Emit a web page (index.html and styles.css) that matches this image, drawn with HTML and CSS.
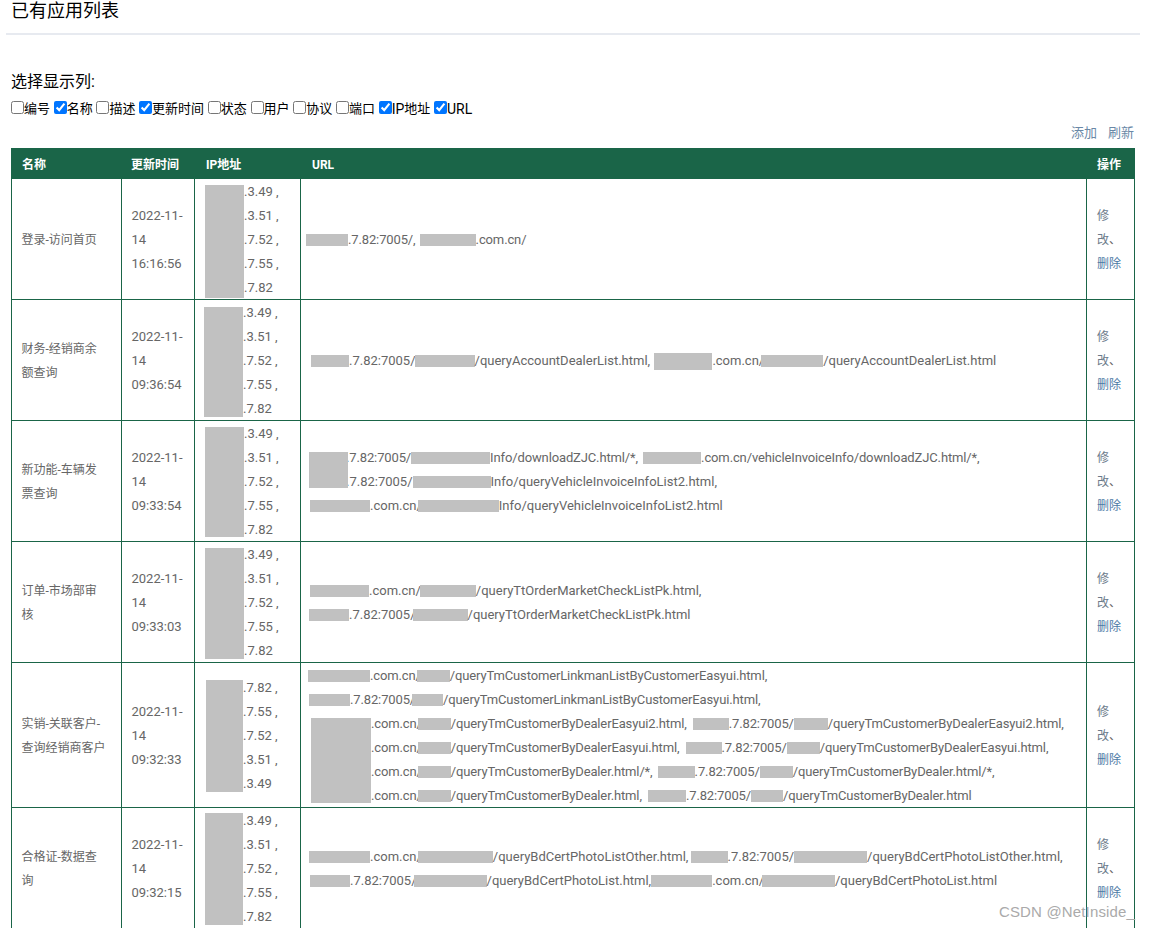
FILE: index.html
```html
<!DOCTYPE html>
<html lang="zh-CN">
<head>
<meta charset="utf-8">
<title>已有应用列表</title>
<link rel="stylesheet" href="styles.css">
</head>
<body>
<div class="page">
  <header class="head"><h1 class="title">已有应用列表</h1></header>
  <p class="cols-label">选择显示列:</p>
  <div class="cols">
    <label><input type="checkbox">编号</label>
    <label><input type="checkbox" checked>名称</label>
    <label><input type="checkbox">描述</label>
    <label><input type="checkbox" checked>更新时间</label>
    <label><input type="checkbox">状态</label>
    <label><input type="checkbox">用户</label>
    <label><input type="checkbox">协议</label>
    <label><input type="checkbox">端口</label>
    <label><input type="checkbox" checked><span class="lat">IP</span>地址</label>
    <label><input type="checkbox" checked><span class="lat">URL</span></label>
  </div>
  <div class="actions"><a href="#">添加</a><a href="#">刷新</a></div>
  <table class="grid">
    <colgroup><col class="c1"><col class="c2"><col class="c3"><col><col class="c5"></colgroup>
    <thead><tr><th>名称</th><th class="th-date">更新时间</th><th class="th-ip">IP地址</th><th class="th-url">URL</th><th>操作</th></tr></thead>
    <tbody>
      <tr>
        <td class="name">登录-访问首页</td>
        <td class="date">2022-11-14<br>16:16:56</td>
        <td class="ipc"><div class="ip"><i class="m ip-a"></i><div>.3.49 ,<br>.3.51 ,<br>.7.52 ,<br>.7.55 ,<br>.7.82</div></div></td>
        <td class="url"><div class="l"><i class="m p1 w42"></i>.7.82:7005/, <i class="m p1 w56"></i>.com.cn/</div></td>
        <td class="op"><a href="#" class="edit">修改</a>、<a href="#">删除</a></td>
      </tr>
      <tr>
        <td class="name">财务-经销商余额查询</td>
        <td class="date">2022-11-14<br>09:36:54</td>
        <td class="ipc"><div class="ip"><i class="m ip-b"></i><div>.3.49 ,<br>.3.51 ,<br>.7.52 ,<br>.7.55 ,<br>.7.82</div></div></td>
        <td class="url"><div class="l w"><i class="m p6 w38"></i>.7.82:7005/<i class="m n1 w60"></i>/queryAccountDealerList.html, <i class="m tall p1 w58"></i>.com.cn/<i class="m n3 w62"></i>/queryAccountDealerList.html</div></td>
        <td class="op"><a href="#" class="edit">修改</a>、<a href="#">删除</a></td>
      </tr>
      <tr>
        <td class="name">新功能-车辆发票查询</td>
        <td class="date">2022-11-14<br>09:33:54</td>
        <td class="ipc"><div class="ip"><i class="m ip-c"></i><div>.3.49 ,<br>.3.51 ,<br>.7.52 ,<br>.7.55 ,<br>.7.82</div></div></td>
        <td class="url">
          <i class="m over o-c"></i>
          <div class="l"><i class="m sp p4 w37"></i>.7.82:7005/<i class="m w79"></i>Info/downloadZJC.html/*, <i class="m p2 w58"></i>.com.cn/vehicleInvoiceInfo/downloadZJC.html/*,</div>
          <div class="l w"><i class="m sp p4 w37"></i>.7.82:7005/<i class="m w78"></i>Info/queryVehicleInvoiceInfoList2.html,</div>
          <div class="l w"><i class="m p5 w60"></i>.com.cn/<i class="m n4 w81"></i>Info/queryVehicleInvoiceInfoList2.html</div>
        </td>
        <td class="op"><a href="#" class="edit">修改</a>、<a href="#">删除</a></td>
      </tr>
      <tr>
        <td class="name">订单-市场部审核</td>
        <td class="date">2022-11-14<br>09:33:03</td>
        <td class="ipc"><div class="ip"><i class="m ip-d"></i><div>.3.49 ,<br>.3.51 ,<br>.7.52 ,<br>.7.55 ,<br>.7.82</div></div></td>
        <td class="url">
          <div class="l w"><i class="m p5 w59"></i>.com.cn/<i class="m n1 w56"></i>/queryTtOrderMarketCheckListPk.html,</div>
          <div class="l w"><i class="m p4 w40"></i>.7.82:7005/<i class="m n3 w55"></i>/queryTtOrderMarketCheckListPk.html</div>
        </td>
        <td class="op"><a href="#" class="edit">修改</a>、<a href="#">删除</a></td>
      </tr>
      <tr>
        <td class="name">实销-关联客户-查询经销商客户</td>
        <td class="date">2022-11-14<br>09:32:33</td>
        <td class="ipc"><div class="ip"><i class="m ip-e"></i><div>.7.82 ,<br>.7.55 ,<br>.7.52 ,<br>.3.51 ,<br>.3.49</div></div></td>
        <td class="url">
          <i class="m over o-e"></i>
          <div class="l"><i class="m p3 w62"></i>.com.cn/<i class="m n4 w33"></i>/queryTmCustomerLinkmanListByCustomerEasyui.html,</div>
          <div class="l"><i class="m p4 w41"></i>.7.82:7005/<i class="m n3 w31"></i>/queryTmCustomerLinkmanListByCustomerEasyui.html,</div>
          <div class="l"><i class="m sp p3 w63"></i>.com.cn/<i class="m n4 w33"></i>/queryTmCustomerByDealerEasyui2.html, <i class="m p3 w36"></i>.7.82:7005/<i class="m w34"></i>/queryTmCustomerByDealerEasyui2.html,</div>
          <div class="l"><i class="m sp p3 w63"></i>.com.cn/<i class="m n4 w33"></i>/queryTmCustomerByDealerEasyui.html, <i class="m p3 w36"></i>.7.82:7005/<i class="m w33"></i>/queryTmCustomerByDealerEasyui.html,</div>
          <div class="l"><i class="m sp p3 w63"></i>.com.cn/<i class="m n4 w33"></i>/queryTmCustomerByDealer.html/*, <i class="m p2 w37"></i>.7.82:7005/<i class="m w33"></i>/queryTmCustomerByDealer.html/*,</div>
          <div class="l"><i class="m sp p3 w63"></i>.com.cn/<i class="m n4 w33"></i>/queryTmCustomerByDealer.html, <i class="m p3 w38"></i>.7.82:7005/<i class="m w32"></i>/queryTmCustomerByDealer.html</div>
        </td>
        <td class="op"><a href="#" class="edit">修改</a>、<a href="#">删除</a></td>
      </tr>
      <tr>
        <td class="name">合格证-数据查询</td>
        <td class="date">2022-11-14<br>09:32:15</td>
        <td class="ipc"><div class="ip"><i class="m ip-f"></i><div>.3.49 ,<br>.3.51 ,<br>.7.52 ,<br>.7.55 ,<br>.7.82</div></div></td>
        <td class="url">
          <div class="l w"><i class="m p4 w61"></i>.com.cn/<i class="m n4 w75"></i>/queryBdCertPhotoListOther.html, <i class="m n1 w37"></i>.7.82:7005/<i class="m w73"></i>/queryBdCertPhotoListOther.html,</div>
          <div class="l w"><i class="m p5 w40"></i>.7.82:7005/<i class="m n3 w73"></i>/queryBdCertPhotoList.html,<i class="m w61"></i>.com.cn/<i class="m n2 w73"></i>/queryBdCertPhotoList.html</div>
        </td>
        <td class="op"><a href="#" class="edit">修改</a>、<a href="#">删除</a></td>
      </tr>
    </tbody>
  </table>
  <div class="mark">CSDN @NetInside_</div>
</div>
</body>
</html>
```
FILE: styles.css
```css
* { box-sizing: border-box; }
html, body { margin: 0; padding: 0; background: #fff; }
body { font-family: Roboto, "Noto Sans CJK SC", sans-serif; color: #000; }
.page { position: relative; height: 928px; overflow: hidden; padding: 0 10px 0 11px; }
.head { margin: 0 0 0 -5px; width: 1134px; height: 35px; border-bottom: 2px solid #e7eaf0; padding: 1px 0 0 5px; }
.title { margin: 0; font-size: 18px; font-weight: 400; line-height: 20px; }
.cols-label { margin: 36px 0 0; font-size: 16px; line-height: 22px; }
.cols { display: flex; gap: 3.7px; margin-top: 6px; font-size: 13px; line-height: 20px; height: 20px; }
.cols label { display: flex; align-items: center; }
.cols input { margin: 0 0 3px; width: 13px; height: 13px; }
.lat { font-size: 14px; }
.actions { display: flex; justify-content: flex-end; gap: 11px; margin-top: 4px; height: 20px; padding-right: 6px; font-size: 13px; line-height: 20px; }
a { color: #4c79a5; text-decoration: none; }
.actions a { color: #6a88a6; }
.grid { width: 1124px; margin-top: 5px; border-collapse: collapse; table-layout: fixed; font-size: 13px; color: #666; }
.c1 { width: 110px; }
.c2 { width: 73px; }
.c3 { width: 106px; }
.c5 { width: 48px; }
.grid th { height: 30px; padding: 3px 10px 0; background: #1a6548; color: #fff; font-size: 12px; line-height: 20px; font-weight: 700; text-align: left; border: 1px solid #1a6548; }
.grid th.th-date { padding-left: 9px; }
.grid th.th-ip { padding-left: 11px; }
.grid th.th-url { padding-left: 11px; }
.grid td { padding: 2px 10px 0; line-height: 24px; border: 1px solid #1a6548; vertical-align: middle; word-break: break-word; }
.grid td.name { font-size: 12px; padding-left: 9.5px; padding-right: 14px; }
.grid td.date { padding-left: 9.5px; padding-right: 9px; }
.grid td.op { font-size: 12px; }
.edit { color: #6b7a8a; }
.grid td.url { position: relative; padding: 1px 4px 0; white-space: nowrap; letter-spacing: -.13px; }
.grid td.url .w { letter-spacing: 0; }
.url .l:last-child { margin-bottom: -1px; }
.grid td.ipc { padding-top: 1px; }
.ip { display: flex; align-items: flex-start; white-space: nowrap; margin-bottom: -1px; }

/* grey redaction blocks */
.m { display: inline-block; height: 12px; vertical-align: -2px; background: #c1c1c1; }
.m.tall { height: 17px; vertical-align: -5px; }
.m.sp { visibility: hidden; }
.n4 { margin-left: -4px; }
.n3 { margin-left: -3px; }
.n2 { margin-left: -2px; }
.n1 { margin-left: -1px; }
.p1 { margin-left: 1px; }
.p2 { margin-left: 2px; }
.p3 { margin-left: 3px; }
.p4 { margin-left: 4px; }
.p5 { margin-left: 5px; }
.p6 { margin-left: 6px; }
.w31 { width: 31px; }
.w32 { width: 32px; }
.w33 { width: 33px; }
.w34 { width: 34px; }
.w36 { width: 36px; }
.w37 { width: 37px; }
.w38 { width: 38px; }
.w40 { width: 40px; }
.w41 { width: 41px; }
.w42 { width: 42px; }
.w55 { width: 55px; }
.w56 { width: 56px; }
.w58 { width: 58px; }
.w59 { width: 59px; }
.w60 { width: 60px; }
.w61 { width: 61px; }
.w62 { width: 62px; }
.w63 { width: 63px; }
.w73 { width: 73px; }
.w75 { width: 75px; }
.w78 { width: 78px; }
.w79 { width: 79px; }
.w81 { width: 81px; }
.ip .m { flex: none; display: block; width: 39px; }
.ip-a { height: 113px; margin-top: 5px; }
.ip-b { height: 110px; margin-top: 6px; margin-left: -1px; }
.ip-c { height: 110px; margin-top: 5px; }
.ip-d { height: 111px; margin-top: 5px; }
.ip-e { height: 112px; margin-top: 4px; margin-left: 1px; }
.ip.ip .ip-e { width: 37px; }
.ip.ip .ip-f { width: 38px; height: 112px; margin-top: 4px; }
.over { position: absolute; }
.o-c { left: 8px; top: 31px; width: 39px; height: 36px; }
.o-e { left: 10px; top: 55px; width: 60px; height: 85px; }
.mark { position: absolute; right: 15px; top: 903px; font-family: "Liberation Sans", sans-serif; font-size: 15px; line-height: 18px; color: #aaa; letter-spacing: .15px; }
```
